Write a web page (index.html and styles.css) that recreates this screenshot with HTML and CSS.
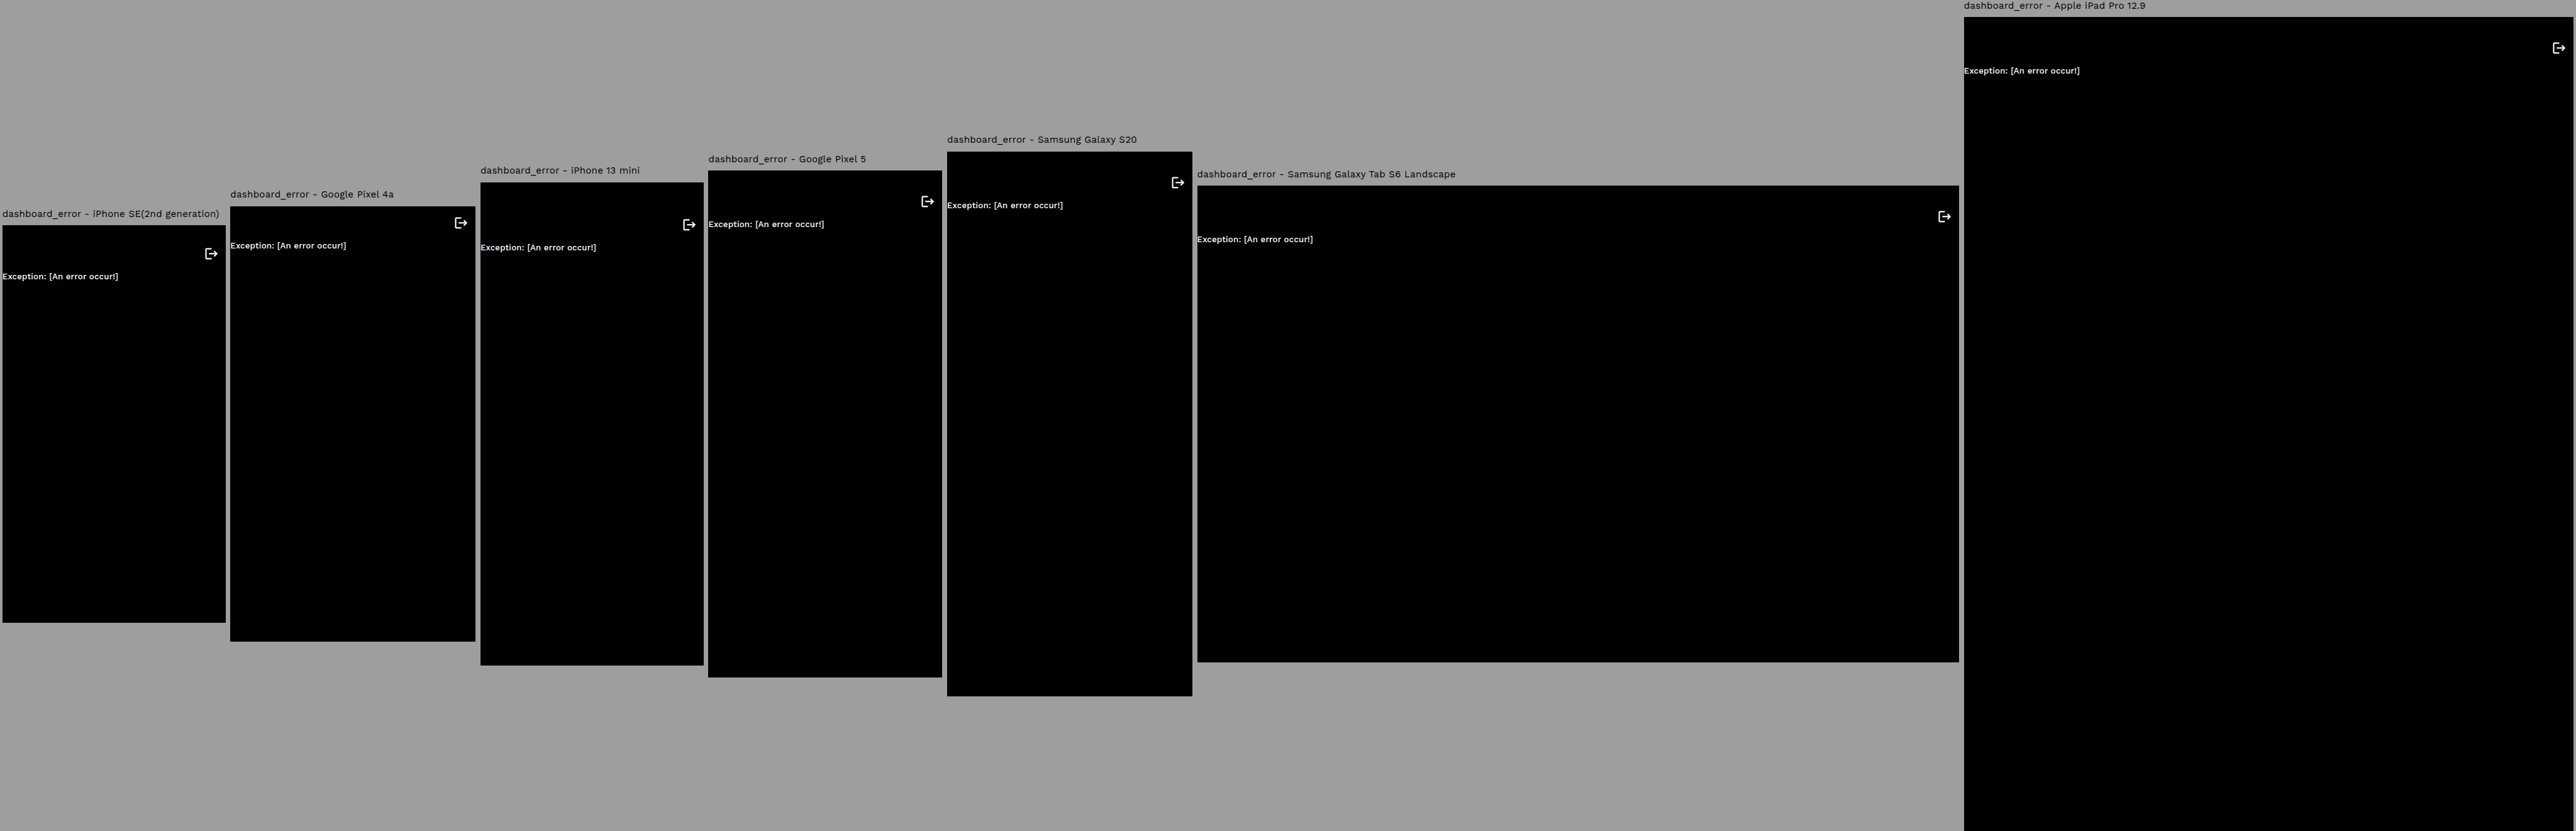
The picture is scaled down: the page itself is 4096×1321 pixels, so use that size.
FILE: index.html
```
<!DOCTYPE html>
<html lang="en">
<head>
<meta charset="utf-8">
<title>dashboard_error</title>
<link rel="stylesheet" href="styles.css">
</head>
<body>
<svg class="defs" aria-hidden="true">
  <symbol id="logout" viewBox="0.4 0.4 23.2 23.2">
    <path d="M17 7l-1.41 1.41L18.17 11H8v2h10.17l-2.58 2.58L17 17l5-5zM4 5h8V3H4c-1.1 0-2 .9-2 2v14c0 1.1.9 2 2 2h8v-2H4V5z"/>
  </symbol>
</svg>
<main class="devices">
  <figure class="device iphone-se">
    <figcaption class="label">dashboard_error - iPhone SE(2nd generation)</figcaption>
    <div class="screen"><header class="app-bar"><svg class="icon"><use href="#logout"/></svg></header><p class="message">Exception: [An error occur!]</p></div>
  </figure>
  <figure class="device pixel-4a">
    <figcaption class="label">dashboard_error - Google Pixel 4a</figcaption>
    <div class="screen"><header class="app-bar"><svg class="icon"><use href="#logout"/></svg></header><p class="message">Exception: [An error occur!]</p></div>
  </figure>
  <figure class="device iphone-13-mini">
    <figcaption class="label">dashboard_error - iPhone 13 mini</figcaption>
    <div class="screen"><header class="app-bar"><svg class="icon"><use href="#logout"/></svg></header><p class="message">Exception: [An error occur!]</p></div>
  </figure>
  <figure class="device pixel-5">
    <figcaption class="label">dashboard_error - Google Pixel 5</figcaption>
    <div class="screen"><header class="app-bar"><svg class="icon"><use href="#logout"/></svg></header><p class="message">Exception: [An error occur!]</p></div>
  </figure>
  <figure class="device galaxy-s20">
    <figcaption class="label">dashboard_error - Samsung Galaxy S20</figcaption>
    <div class="screen"><header class="app-bar"><svg class="icon"><use href="#logout"/></svg></header><p class="message">Exception: [An error occur!]</p></div>
  </figure>
  <figure class="device tab-s6">
    <figcaption class="label">dashboard_error - Samsung Galaxy Tab S6 Landscape</figcaption>
    <div class="screen"><header class="app-bar"><svg class="icon"><use href="#logout"/></svg></header><p class="message">Exception: [An error occur!]</p></div>
  </figure>
  <figure class="device ipad-pro">
    <figcaption class="label">dashboard_error - Apple iPad Pro 12.9</figcaption>
    <div class="screen"><header class="app-bar"><svg class="icon"><use href="#logout"/></svg></header><p class="message">Exception: [An error occur!]</p></div>
  </figure>
</main>
</body>
</html>
```
FILE: styles.css
```
/* One --u is one logical device pixel; the board is 4327 of them wide. */
:root {
  --u: calc(100vw / 4327);
}

* {
  box-sizing: border-box;
  margin: 0;
  padding: 0;
}

body {
  background: #9e9e9e;
  font-family: "Work Sans", Inter, Roboto, sans-serif;
  letter-spacing: calc(0.25 * var(--u));
  overflow: hidden;
}

.defs {
  display: none;
}

.devices {
  display: flex;
  align-items: center;
  gap: calc(8 * var(--u));
  height: calc(1395 * var(--u));
  padding: 0 calc(4 * var(--u));
}

.device {
  flex: none;
  width: calc(var(--w) * var(--u));
}

.label {
  height: calc(29 * var(--u));
  font-size: calc(16 * var(--u));
  line-height: calc(19.6 * var(--u));
  white-space: nowrap;
  color: #000;
}

.screen {
  height: calc(var(--h) * var(--u));
  padding-top: calc(var(--inset, 24) * var(--u));
  background: #000;
  color: #fff;
}

.app-bar {
  display: flex;
  align-items: center;
  justify-content: flex-end;
  height: calc(56 * var(--u));
  padding-right: calc(12 * var(--u));
}

.icon {
  width: calc(24 * var(--u));
  height: calc(24 * var(--u));
  fill: #fff;
  stroke: #fff;
  stroke-width: 0.2;
}

.message {
  font-size: calc(14 * var(--u));
  font-weight: 500;
  line-height: calc(22 * var(--u));
  letter-spacing: calc(0.2 * var(--u));
  white-space: nowrap;
}

.iphone-se { --w: 375; --h: 667; --inset: 20; }
.pixel-4a { --w: 412; --h: 732; --inset: 0; }
.iphone-13-mini { --w: 375; --h: 812; --inset: 44; }
.pixel-5 { --w: 393; --h: 851; }
.galaxy-s20 { --w: 412; --h: 915; }
.tab-s6 { --w: 1280; --h: 800; }
.ipad-pro { --w: 1024; --h: 1366; }
```
